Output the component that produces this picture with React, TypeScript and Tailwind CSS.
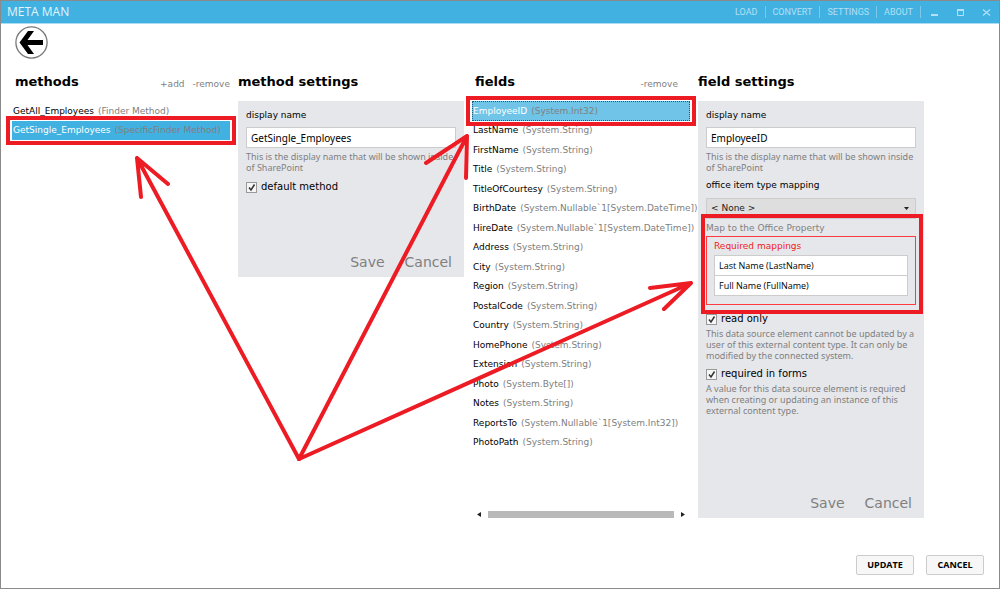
import type { ReactNode } from 'react';

interface IListEntry {
  name: string;
  type: string;
}

interface IEntryListProps {
  entries: IListEntry[];
  selected: string;
  label: string;
  focused?: boolean;
}

const METHODS: IListEntry[] = [
  { name: 'GetAll_Employees', type: 'Finder Method' },
  { name: 'GetSingle_Employees', type: 'SpecificFinder Method' },
];

const FIELDS: IListEntry[] = [
  { name: 'EmployeeID', type: 'System.Int32' },
  { name: 'LastName', type: 'System.String' },
  { name: 'FirstName', type: 'System.String' },
  { name: 'Title', type: 'System.String' },
  { name: 'TitleOfCourtesy', type: 'System.String' },
  { name: 'BirthDate', type: 'System.Nullable`1[System.DateTime]' },
  { name: 'HireDate', type: 'System.Nullable`1[System.DateTime]' },
  { name: 'Address', type: 'System.String' },
  { name: 'City', type: 'System.String' },
  { name: 'Region', type: 'System.String' },
  { name: 'PostalCode', type: 'System.String' },
  { name: 'Country', type: 'System.String' },
  { name: 'HomePhone', type: 'System.String' },
  { name: 'Extension', type: 'System.String' },
  { name: 'Photo', type: 'System.Byte[]' },
  { name: 'Notes', type: 'System.String' },
  { name: 'ReportsTo', type: 'System.Nullable`1[System.Int32]' },
  { name: 'PhotoPath', type: 'System.String' },
];

const MENU = ['LOAD', 'CONVERT', 'SETTINGS', 'ABOUT'];

const TitleBar = () => (
  <header className="flex h-[23px] items-center border-b border-[#a9dcf2] bg-[#41b1e1] pl-1.5 font-['Open_Sans','Noto_Sans',sans-serif]">
    <h1 className="text-[12px] leading-4 text-[#e3f4fb]">META MAN</h1>
    <nav className="ml-auto flex items-center font-[Roboto,'Open_Sans',sans-serif] text-[9px] leading-3 text-[#b3e0f4]">
      {MENU.map((item) => (
        <a key={item} href="#" className="border-r border-[#7cc9ea] px-[7px]">
          {item}
        </a>
      ))}
    </nav>
    <div className="flex text-[#b3e0f4]">
      <button type="button" aria-label="Minimize" className="flex w-[26px] justify-center">
        <svg width="9" height="9" viewBox="0 0 9 9">
          <path d="M1 6h7v2H1z" fill="currentColor" />
        </svg>
      </button>
      <button type="button" aria-label="Maximize" className="flex w-[26px] justify-center">
        <svg width="9" height="9" viewBox="0 0 9 9">
          <path d="M1.5 2v5.500h6V2" fill="none" stroke="currentColor" />
          <path d="M1 1h7v2H1z" fill="currentColor" />
        </svg>
      </button>
      <button type="button" aria-label="Close" className="flex w-[26px] justify-center">
        <svg width="9" height="9" viewBox="0 0 9 9">
          <path d="M1 1.500l7 6M8 1.500l-7 6" stroke="currentColor" strokeWidth="1.200" />
        </svg>
      </button>
    </div>
  </header>
);

const SectionTitle = ({ children }: { children: ReactNode }) => (
  <h2 className="text-[13px] leading-4 font-bold text-black">{children}</h2>
);

const EntryList = ({ entries, selected, label, focused }: IEntryListProps) => (
  <ul aria-label={label} className="grid auto-rows-fr grid-cols-1">
    {entries.map((entry) => {
      const active = entry.name === selected;
      return (
        <li key={entry.name} className={active ? 'relative' : undefined}>
          <button
            type="button"
            className={`flex h-full w-full items-center gap-1 pl-px text-left text-[9px] leading-3 whitespace-nowrap ${
              active ? (focused ? 'bg-[#70c4e8] text-white outline-1 -outline-offset-1 outline-dotted outline-[#1b5a78]' : 'bg-[#41b1e1] text-white') : 'text-black'
            }`}
          >
            <span>{entry.name}</span>
            <span className="text-[#808080]">({entry.type})</span>
          </button>
          {active && (
            <span className="pointer-events-none absolute -inset-x-[6px] -inset-y-[5px] z-10 border-4 border-[#ed1c24]" />
          )}
        </li>
      );
    })}
  </ul>
);

const TextField = ({ id, label, value }: { id: string; label: string; value: string }) => (
  <>
    <label htmlFor={id} className="block text-[9px] leading-3 text-black">
      {label}
    </label>
    <input
      id={id}
      type="text"
      defaultValue={value}
      className="mt-[6px] block h-[21px] w-full border border-[#ccc] bg-white px-1 font-['Noto_Sans','DejaVu_Sans',sans-serif] text-[10px] leading-4 text-black"
    />
  </>
);

const Hint = ({ children }: { children: ReactNode }) => (
  <p className="-mr-1.5 font-['Noto_Sans','DejaVu_Sans',sans-serif] text-[9px] leading-[11px] text-[#808080]">
    {children}
  </p>
);

const CheckBox = ({ label }: { label: string }) => (
  <label className="flex items-center gap-1 text-[10px] leading-3 text-black">
    <span className="relative flex">
      <input type="checkbox" defaultChecked className="peer size-[11px] appearance-none border border-[#999] bg-[#f6f6f6]" />
      <svg className="pointer-events-none absolute inset-0 hidden peer-checked:block" width="11" height="11" viewBox="0 0 11 11">
        <path d="M3 5.500l2 2.500 3.500-5.500" fill="none" stroke="#333" strokeWidth="1.500" />
      </svg>
    </span>
    {label}
  </label>
);

const PanelActions = () => (
  <div className="mt-auto flex justify-end gap-5 pr-1 text-[14px] leading-4 text-[#808080]">
    <button type="button">Save</button>
    <button type="button">Cancel</button>
  </div>
);

const ScrollBar = () => (
  <div className="mt-auto flex h-[7px] items-center justify-between px-[5px]">
    <svg width="4" height="5" viewBox="0 0 4 5">
      <path d="M4 0v5L0 2.500z" fill="#222" />
    </svg>
    <span className="mx-[7px] h-full flex-1 bg-[#b9b9b9]" />
    <svg width="4" height="5" viewBox="0 0 4 5">
      <path d="M0 0v5l4-2.500z" fill="#222" />
    </svg>
  </div>
);

const OfficeMappings = () => (
  <div className="relative">
    <p className="text-[9px] leading-3 text-[#808080]">Map to the Office Property</p>
    <div className="mt-[2px] border border-[#ff3b41] px-[7px] pt-[3px] pb-2">
      <p className="text-[9px] leading-3 text-[#ed1c24]">Required mappings</p>
      <ul className="mt-[3px] border border-b-0 border-[#ccc] bg-white font-['Open_Sans','Noto_Sans',sans-serif] text-[9px] text-black">
        <li className="h-5 border-b border-[#ccc] px-1 leading-[19px]">Last Name (LastName)</li>
        <li className="h-5 border-b border-[#ccc] px-1 leading-[19px]">Full Name (FullName)</li>
      </ul>
    </div>
    <span className="pointer-events-none absolute -top-2 -right-[7px] -bottom-[9px] -left-[5px] z-10 border-4 border-[#ed1c24]" />
  </div>
);

const Arrows = () => (
  <svg
    className="pointer-events-none absolute -top-px -left-px z-20"
    width="1000"
    height="589"
    viewBox="0 0 1000 589"
    fill="none"
    stroke="#ed1c24"
    strokeWidth="4"
    strokeLinecap="round"
    strokeLinejoin="round"
  >
    <path d="M299 459L137 158M141 197l-4-39 31 26" />
    <path d="M299 459L467 136M426 163l41-27-1 42" />
    <path d="M299 459L691 283M650 288l41-5-27 26" />
  </svg>
);

const App = () => {
  return (
    <div className="relative flex min-h-screen flex-col border border-[#8a8a8a] bg-white font-['DejaVu_Sans',Verdana,sans-serif]">
      <TitleBar />
      <div className="pt-0.5 pl-3.5">
        <button type="button" aria-label="Back" className="block">
          <svg width="33" height="33" viewBox="0 0 33 33">
            <circle cx="16.500" cy="16.500" r="15.600" fill="#fff" stroke="#777" strokeWidth="1.300" />
            <path d="M4.500 16.500L13 5h6l-6.500 9H28v5H12.500l6.500 9h-6z" fill="#000" />
          </svg>
        </button>
      </div>

      <main className="grid grid-cols-2 gap-2 pt-[15px] pr-[75px] pl-[11px]">
        <div className="grid grid-cols-2">
          {/* Methods */}
          <section className="flex flex-col pr-2">
            <div className="mb-[11px] flex items-center pl-[3px]">
              <SectionTitle>methods</SectionTitle>
              <div className="ml-auto flex gap-2 pt-1 text-[9px] leading-3 text-[#808080]">
                <button type="button">+add</button>
                <button type="button">-remove</button>
              </div>
            </div>
            <div className="grid h-[39px] grid-cols-1">
              <EntryList label="methods" entries={METHODS} selected="GetSingle_Employees" />
            </div>
          </section>

          {/* Method settings */}
          <section>
            <div className="mb-[11px]">
              <SectionTitle>method settings</SectionTitle>
            </div>
            <form className="flex min-h-[176px] flex-col bg-[#e6e7eb] px-2 pt-2 pb-[7px]">
              <TextField id="method-name" label="display name" value="GetSingle_Employees" />
              <div className="mt-[3px]">
                <Hint>This is the display name that will be shown inside of SharePoint</Hint>
              </div>
              <div className="mt-2">
                <CheckBox label="default method" />
              </div>
              <PanelActions />
            </form>
          </section>
        </div>

        <div className="grid grid-cols-2">
          {/* Fields */}
          <section className="flex flex-col pr-2">
            <div className="mb-[11px] flex items-center pl-[3px]">
              <SectionTitle>fields</SectionTitle>
              <button type="button" className="ml-auto pt-1 pr-3 text-[9px] leading-3 text-[#808080]">
                -remove
              </button>
            </div>
            <div className="grid h-[351px] grid-cols-1">
              <EntryList label="fields" entries={FIELDS} selected="EmployeeID" focused />
            </div>
            <ScrollBar />
          </section>

          {/* Field settings */}
          <section>
            <div className="mb-[11px]">
              <SectionTitle>field settings</SectionTitle>
            </div>
            <form className="flex min-h-[417px] flex-col bg-[#e6e7eb] px-2 pt-2 pb-[7px]">
              <TextField id="field-name" label="display name" value="EmployeeID" />
              <div className="mt-[3px]">
                <Hint>This is the display name that will be shown inside of SharePoint</Hint>
              </div>
              <label htmlFor="office-type" className="mt-[6px] block text-[9px] leading-3 text-black">
                office item type mapping
              </label>
              <div className="relative mt-[7px]">
                <select
                  id="office-type"
                  className="block h-[21px] w-full appearance-none border border-[#ccc] bg-[#dedede] px-1 text-[9px] text-[#222]"
                >
                  <option>&lt; None &gt;</option>
                </select>
                <svg className="pointer-events-none absolute top-[9px] right-[7px]" width="5" height="3" viewBox="0 0 5 3">
                  <path d="M0 0h5L2.500 3z" fill="#222" />
                </svg>
              </div>
              <div className="mt-[3px]">
                <OfficeMappings />
              </div>
              <div className="mt-2">
                <CheckBox label="read only" />
              </div>
              <div className="mt-[3px]">
                <Hint>
                  This data source element cannot be updated by a user of this external content type. It can only be
                  modified by the connected system.
                </Hint>
              </div>
              <div className="mt-[7px]">
                <CheckBox label="required in forms" />
              </div>
              <div className="mt-[3px]">
                <Hint>
                  A value for this data source element is required when creating or updating an instance of this
                  external content type.
                </Hint>
              </div>
              <PanelActions />
            </form>
          </section>
        </div>
      </main>

      <footer className="mt-auto flex justify-end gap-3 pr-[15px] pb-[13px] font-['Open_Sans','Noto_Sans',sans-serif] text-[9px] font-bold text-black">
        <button type="button" className="h-5 w-[58px] rounded-xs border border-[#ccc] bg-[#f7f7f7]">
          UPDATE
        </button>
        <button type="button" className="h-5 w-[58px] rounded-xs border border-[#ccc] bg-[#f7f7f7]">
          CANCEL
        </button>
      </footer>

      <Arrows />
    </div>
  );
};

export default App;
